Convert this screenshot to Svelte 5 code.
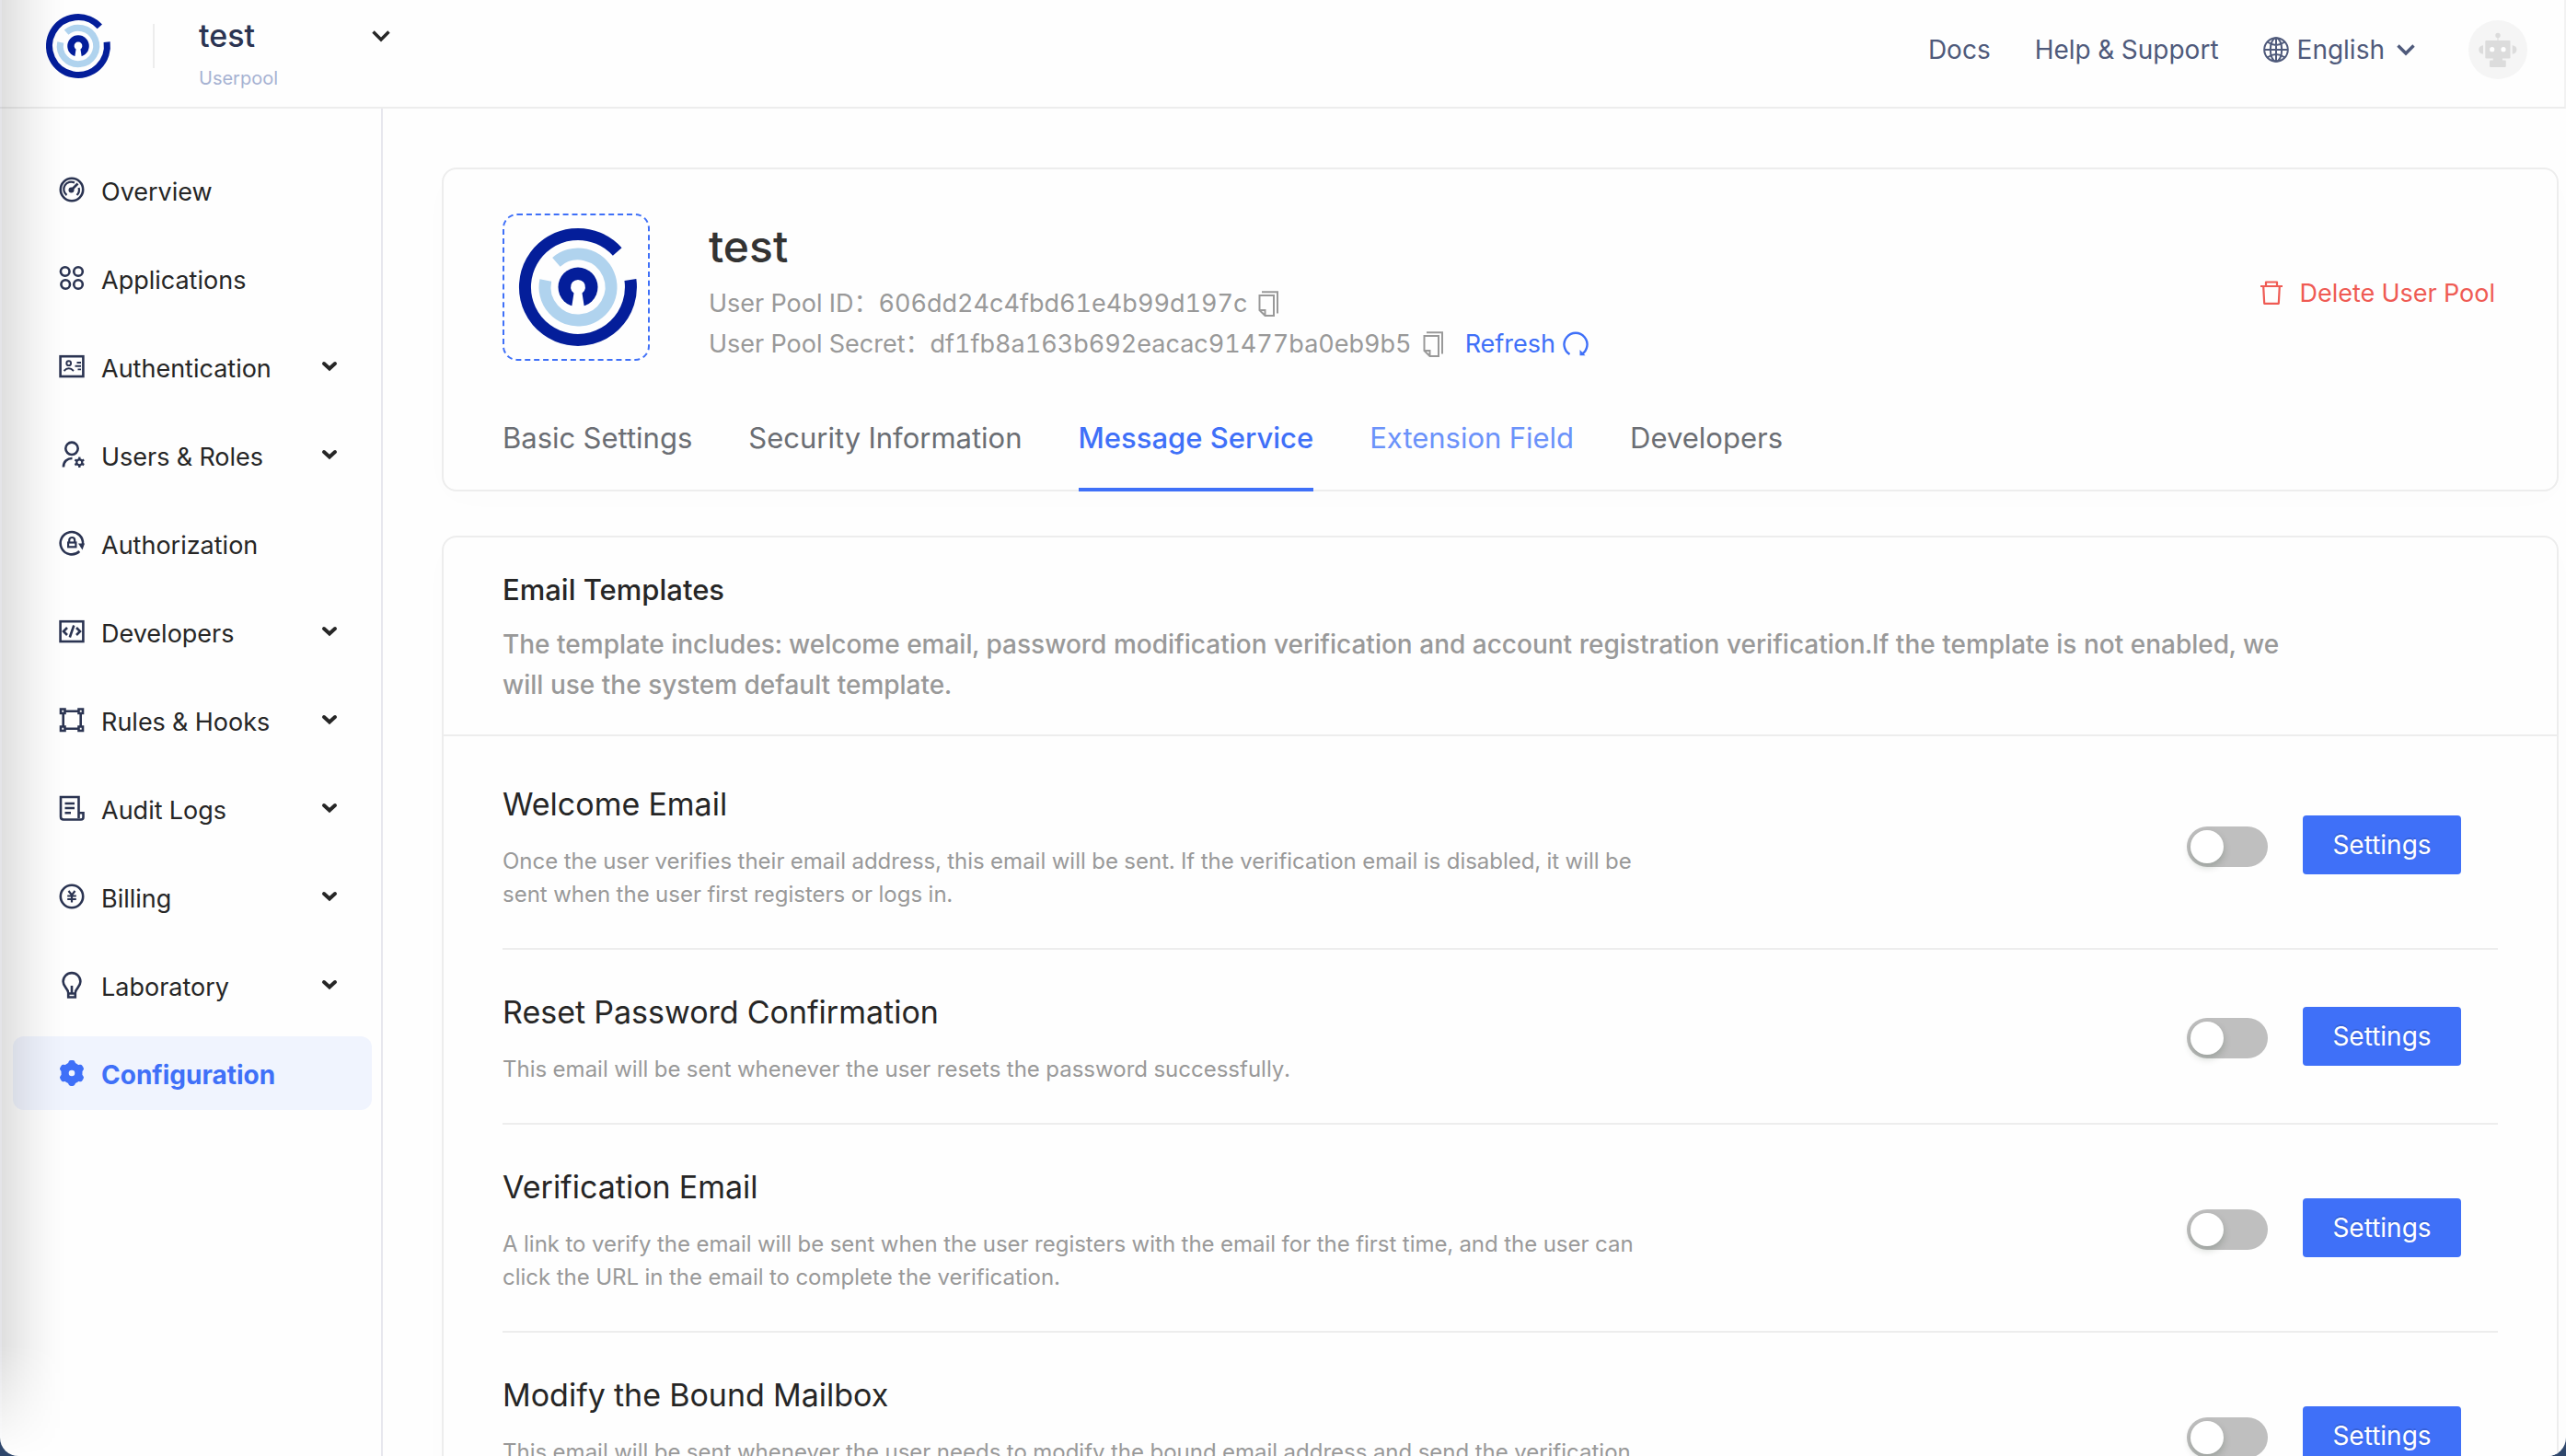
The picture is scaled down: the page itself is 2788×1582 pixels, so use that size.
<script>
  const nav = [
    { icon: 'overview', label: 'Overview' },
    { icon: 'apps', label: 'Applications' },
    { icon: 'auth', label: 'Authentication', group: true },
    { icon: 'users', label: 'Users & Roles', group: true },
    { icon: 'authorization', label: 'Authorization' },
    { icon: 'code', label: 'Developers', group: true },
    { icon: 'rules', label: 'Rules & Hooks', group: true },
    { icon: 'logs', label: 'Audit Logs', group: true },
    { icon: 'billing', label: 'Billing', group: true },
    { icon: 'lab', label: 'Laboratory', group: true },
    { icon: 'config', label: 'Configuration', active: true }
  ];

  const tabs = [
    { label: 'Basic Settings' },
    { label: 'Security Information' },
    { label: 'Message Service', state: 'active' },
    { label: 'Extension Field', state: 'hover' },
    { label: 'Developers' }
  ];

  let templates = $state([
    {
      title: 'Welcome Email',
      text: 'Once the user verifies their email address, this email will be sent. If the verification email is disabled, it will be sent when the user first registers or logs in.',
      on: false
    },
    {
      title: 'Reset Password Confirmation',
      text: 'This email will be sent whenever the user resets the password successfully.',
      on: false
    },
    {
      title: 'Verification Email',
      text: 'A link to verify the email will be sent when the user registers with the email for the first time, and the user can click the URL in the email to complete the verification.',
      on: false
    },
    {
      title: 'Modify the Bound Mailbox',
      text: 'This email will be sent whenever the user needs to modify the bound email address and send the verification link to the new email address.',
      on: false
    }
  ]);

  const spokes = [30, 90, 150, 210, 270, 330];
</script>

{#snippet logo()}
  <svg viewBox="0 0 128 128" aria-hidden="true">
    <g fill="none" stroke-width="13">
      <path stroke="#041e9a" d="M120.9 56A57.5 57.5 0 1 1 106.7 25.5" />
      <path stroke="#b0d3ee" d="M40.4 36.8A36 36 0 1 1 28.8 56.5" />
    </g>
    <circle cx="64" cy="64" r="21.5" fill="#041e9a" />
    <path fill="#fff" d="M59.5 70.5A8 8 0 1 1 68.5 70.5L71 86.5H57z" />
  </svg>
{/snippet}

{#snippet chevron()}
  <svg class="chevron" viewBox="0 0 20 12" aria-hidden="true">
    <path d="M1.5 1.5L10 10L18.5 1.5" fill="none" stroke="currentColor" stroke-width="3.4" />
  </svg>
{/snippet}

{#snippet copy()}
  <svg class="copy" viewBox="0 0 22 28" fill="none" stroke="currentColor" stroke-width="2" aria-hidden="true">
    <path d="M1.5 5H17V27H7.5L1.5 21zM1.5 21H7.5V27M4 1.2H21V24.5" />
  </svg>
{/snippet}

<div class="page">
  <header class="topbar">
    <a class="brand" href="#home" aria-label="Home">{@render logo()}</a>
    <span class="divider"></span>
    <button class="pool" type="button">
      <span class="pool-name">test {@render chevron()}</span>
      <span class="pool-kind">Userpool</span>
    </button>
    <nav class="links" aria-label="Help">
      <a href="#docs">Docs</a>
      <a href="#help">Help &amp; Support</a>
      <button class="lang" type="button">
        <svg class="globe" viewBox="0 0 28 28" fill="none" stroke="currentColor" stroke-width="2" aria-hidden="true">
          <circle cx="14" cy="14" r="12.8" />
          <ellipse cx="14" cy="14" rx="6.2" ry="12.8" />
          <path d="M14 1V27M1 14H27M4.5 5.5Q14 12.5 23.5 5.5M4.5 22.5Q14 15.5 23.5 22.5" />
        </svg>
        <span>English</span>
        {@render chevron()}
      </button>
      <button class="avatar" type="button" aria-label="Account">
        <svg viewBox="0 0 64 64" aria-hidden="true">
          <g fill="#dcdcdc">
            <circle cx="32" cy="16.5" r="2.7" />
            <path d="M31.5 18h1v5h-1z" />
            <rect x="18.3" y="22" width="27.2" height="19.5" rx="1" />
            <path d="M16 27.3v9.4q-4.7-.5-4.7-4.7t4.7-4.7zM47.7 27.3v9.4q4.7-.5 4.7-4.7t-4.7-4.7z" />
            <path d="M26.7 41h10.3v4H26.7z" />
            <rect x="23" y="43.5" width="17.7" height="7.5" rx="1" />
          </g>
          <circle cx="25.7" cy="31.7" r="2.6" fill="#fff" />
          <circle cx="38" cy="31.7" r="2.6" fill="#fff" />
        </svg>
      </button>
    </nav>
  </header>

  <div class="body">
    <nav class="sidebar" aria-label="Main">
      {#each nav as item}
        <a class="item" class:active={item.active} href="#{item.icon}">
          <svg class="icon" viewBox="0 0 28 28" fill="none" stroke="currentColor" stroke-width="2.6" aria-hidden="true">
            {#if item.icon === 'overview'}
              <circle cx="14" cy="14" r="12.2" />
              <path stroke-width="2.2" d="M8.5 20A8 8 0 0 1 17 6.5M21.6 12A8 8 0 0 1 19.5 20" />
              <path d="M14 14L20.5 7.5" />
              <circle cx="13.5" cy="14.5" r="3" fill="currentColor" stroke="none" />
            {:else if item.icon === 'apps'}
              <circle cx="6.7" cy="7" r="4.8" />
              <circle cx="21" cy="7" r="4.8" />
              <circle cx="7.2" cy="21" r="4.8" />
              <circle cx="21" cy="21" r="4.8" />
            {:else if item.icon === 'auth'}
              <rect x="1.6" y="3.2" width="24.8" height="21.8" />
              <g stroke-width="1.9">
                <circle cx="10.7" cy="10.7" r="2.4" />
                <path d="M5.5 19Q10.7 13.5 16 19M19.5 10H24M17.5 13.7H24M20.5 17.4H24" />
              </g>
            {:else if item.icon === 'users'}
              <circle cx="14" cy="7.3" r="6.7" />
              <path d="M4.9 27.5C4.9 21.5 9 18 14.5 18" />
              <circle cx="22.3" cy="22.3" r="3" stroke-width="2.2" />
              {#each spokes as a}
                <path stroke-width="2.4" d="M25.5 22.3H28" transform="rotate({a} 22.3 22.3)" />
              {/each}
            {:else if item.icon === 'authorization'}
              <path d="M22.3 23A12.2 12.2 0 1 1 26 15.5" />
              <path d="M21 14.5H28L25.5 21.5z" fill="currentColor" stroke="none" />
              <rect x="10.1" y="13.5" width="8.3" height="4.8" stroke-width="2.2" />
              <path stroke-width="2.2" d="M11.2 13.5V11a3 3 0 0 1 6 0V13.5" />
            {:else if item.icon === 'code'}
              <rect x="1.6" y="3.2" width="24.8" height="21.8" />
              <path d="M9 10L5 14L9 18M19 10L23 14L19 18M16.3 7.5L11.8 20.5" />
            {:else if item.icon === 'rules'}
              <path d="M2 2.5H6.5V7H2zM21.5 2.5H26V7H21.5zM2 21.5H6.5V26H2zM21.5 21.5H26V26H21.5zM7 4.7H21M7 23.7H21M4.7 7V21M23.7 7V21" />
            {:else if item.icon === 'logs'}
              <path d="M21.5 25V2H2V23.5Q2 26.5 5 26.5H24Q26.5 26.5 26.5 24V19.3H21.5M6.5 9H17M6.5 14H17M6.5 19.3H13" />
            {:else if item.icon === 'billing'}
              <circle cx="14" cy="14" r="12.2" />
              <path stroke-width="2.2" d="M10.5 8L14 12.5L17.5 8M14 12V20.5M9.2 13.5H18.8M9.2 17H18.8" />
            {:else if item.icon === 'lab'}
              <path d="M10 22.5C10 18 4.6 16.5 4.6 10.5A9.4 9.4 0 0 1 23.4 10.5C23.4 16.5 18 18 18 22.5M14 15V24M9 23.5H19M10.2 23V27.5H17.8V23" />
            {:else}
              <circle cx="14" cy="14" r="7.4" stroke-width="8.2" />
              {#each spokes as a}
                <path stroke-width="5" stroke-linecap="round" stroke-linejoin="round" d="M21 11.5L25.4 12.8V15.2L21 16.5" transform="rotate({a} 14 14)" />
              {/each}
            {/if}
          </svg>
          <span class="item-label">{item.label}</span>
          {#if item.group}
            <svg class="caret" viewBox="0 0 16 10" aria-hidden="true">
              <path d="M2 2L8 7.5L14 2" fill="none" stroke="currentColor" stroke-width="4" stroke-linecap="round" />
            </svg>
          {/if}
        </a>
      {/each}
    </nav>

    <main class="content">
      <section class="card overview">
        <div class="summary">
          <div class="pool-logo">{@render logo()}</div>
          <div class="info">
            <h1>test</h1>
            <p>
              <span>User Pool ID&#xFF1A;606dd24c4fbd61e4b99d197c</span>
              <button type="button" aria-label="Copy user pool ID">{@render copy()}</button>
            </p>
            <p>
              <span>User Pool Secret&#xFF1A;df1fb8a163b692eacac91477ba0eb9b5</span>
              <button type="button" aria-label="Copy user pool secret">{@render copy()}</button>
              <button class="refresh" type="button">
                Refresh
                <svg viewBox="0 0 28 28" fill="none" stroke="currentColor" stroke-width="2.4" aria-hidden="true">
                  <path d="M7.5 25A12.5 12.5 0 1 1 20.5 25" />
                  <path d="M18.5 20V26.3H24.5z" fill="currentColor" stroke="none" />
                </svg>
              </button>
            </p>
          </div>
          <button class="delete" type="button">
            <svg viewBox="0 0 24 26" fill="none" stroke="currentColor" stroke-width="2.2" stroke-linejoin="round" aria-hidden="true">
              <path d="M0 6H24M6 6V1.5H18V6M3.2 6L4.2 24.8H19.8L20.8 6" />
            </svg>
            Delete User Pool
          </button>
        </div>
        <div class="tabs" role="tablist">
          {#each tabs as tab}
            <button class="tab {tab.state ?? ''}" type="button" role="tab" aria-selected={tab.state === 'active'}>{tab.label}</button>
          {/each}
        </div>
      </section>

      <section class="card">
        <div class="card-head">
          <h2>Email Templates</h2>
          <p>The template includes: welcome email, password modification verification and account registration verification.If the template is not enabled, we will use the system default template.</p>
        </div>
        <ul class="list">
          {#each templates as row}
            <li class="row">
              <div class="row-text">
                <h3>{row.title}</h3>
                <p>{row.text}</p>
              </div>
              <div class="actions">
                <input class="switch" type="checkbox" role="switch" aria-label={row.title} bind:checked={row.on} />
                <button class="primary" type="button">Settings</button>
              </div>
            </li>
          {/each}
        </ul>
      </section>
    </main>
  </div>
  <div class="edge-shade"></div>
</div>

<style>
  :global(body) {
    background: #2f476c;
  }
  .page {
    --blue: #3f70f8;
    --line: #ededed;
    --muted: #999;
    position: relative;
    display: flex;
    flex-direction: column;
    height: 100vh;
    overflow: hidden;
    border-radius: 0 0 20px 20px;
    background: #fefefe;
    color: #262626;
    font-family: Inter, 'Noto Sans CJK SC', sans-serif;
    font-size: 28px;
    font-variant-numeric: tabular-nums;
  }
  .page * {
    box-sizing: border-box;
  }
  h1, h2, h3, p, ul {
    margin: 0;
    padding: 0;
    font-weight: 400;
  }
  button {
    padding: 0;
    border: 0;
    background: none;
    color: inherit;
    font: inherit;
    cursor: pointer;
  }
  a {
    color: inherit;
    text-decoration: none;
  }
  svg {
    display: block;
    flex: none;
    overflow: visible;
  }

  .topbar {
    flex: none;
    display: flex;
    align-items: flex-start;
    height: 118px;
    padding: 15px 40px 0 50px;
    border-right: 2px solid #f2f2f2;
    border-bottom: 2px solid var(--line);
  }
  .brand {
    width: 70px;
    height: 70px;
  }
  .divider {
    width: 2px;
    height: 48px;
    margin: 11px 48px 0 46px;
    background: var(--line);
  }
  .pool {
    display: flex;
    flex-direction: column;
    gap: 12px;
    width: 208px;
    padding-top: 4px;
    text-align: left;
  }
  .pool-name {
    display: flex;
    align-items: center;
    justify-content: space-between;
    color: #2b3452;
    font-size: 34px;
    font-weight: 500;
    line-height: 40px;
  }
  .pool-name .chevron {
    color: #262626;
  }
  .pool-kind {
    color: #a6b2d2;
    font-size: 20px;
    line-height: 28px;
  }
  .chevron {
    width: 20px;
    height: 12px;
  }
  .links {
    display: flex;
    align-items: center;
    gap: 48px;
    margin-left: auto;
    padding-top: 7px;
    color: #4f5a7b;
  }
  .lang {
    display: flex;
    align-items: center;
    gap: 9px;
  }
  .lang .chevron {
    margin: 0 10px 0 4px;
  }
  .globe {
    width: 28px;
    height: 28px;
  }
  .avatar {
    width: 64px;
    height: 64px;
    border-radius: 50%;
    background: #f5f5f5;
  }

  .body {
    flex: 1;
    display: flex;
    min-height: 0;
  }
  .sidebar {
    flex: none;
    display: flex;
    flex-direction: column;
    gap: 16px;
    width: 416px;
    padding: 48px 10px 0 14px;
    border-right: 2px solid #e7e7ee;
  }
  .item {
    display: flex;
    align-items: center;
    gap: 18px;
    height: 80px;
    padding: 0 38px 0 50px;
    border-radius: 12px;
    font-size: 27px;
  }
  .item.active {
    background: #f0f4fe;
    color: var(--blue);
    font-size: 28px;
    font-weight: 700;
  }
  .icon {
    width: 28px;
    height: 28px;
    color: #2b3452;
  }
  .active .icon {
    color: var(--blue);
  }
  .item-label {
    flex: 1;
    padding-top: 4px;
  }
  .caret {
    width: 16px;
    height: 10px;
  }

  .content {
    flex: 1;
    display: flex;
    flex-direction: column;
    gap: 48px;
    min-width: 0;
    padding: 64px 8px 0 64px;
  }
  .card {
    flex: none;
    border: 2px solid var(--line);
    border-radius: 16px;
    background: #fefefe;
    box-shadow: 0 8px 40px rgba(0, 30, 20, 0.012);
  }
  .overview {
    padding: 48px 64px 0;
  }
  .summary {
    display: flex;
    align-items: flex-start;
  }
  .pool-logo {
    width: 160px;
    height: 160px;
    margin-right: 64px;
    padding: 14px 12px 14px 16px;
    border: 2px dashed var(--blue);
    border-radius: 16px;
  }
  .info h1 {
    margin-bottom: 4px;
    color: #333;
    font-size: 48px;
    font-weight: 500;
    line-height: 72px;
  }
  .info p {
    display: flex;
    align-items: center;
    gap: 12px;
    height: 44px;
    color: var(--muted);
    font-size: 27px;
    line-height: 44px;
  }
  .copy {
    width: 22px;
    height: 28px;
  }
  .refresh {
    display: flex;
    align-items: center;
    gap: 8px;
    margin-left: 12px;
    color: var(--blue);
  }
  .refresh svg {
    width: 28px;
    height: 28px;
  }
  .delete {
    display: flex;
    align-items: center;
    align-self: center;
    gap: 18px;
    margin-left: auto;
    padding: 8px 3px 0 0;
    color: #ef5b54;
    font-size: 27px;
  }
  .delete svg {
    width: 24px;
    height: 26px;
  }
  .tabs {
    display: flex;
    gap: 61px;
    margin: 24px 0 -2px;
    color: #6b6e74;
    font-size: 31px;
  }
  .tab {
    height: 114px;
    border-bottom: 4px solid transparent;
  }
  .tab.active {
    border-bottom-color: var(--blue);
    color: var(--blue);
    font-weight: 500;
  }
  .tab.hover {
    color: #6b92fa;
  }

  .card-head {
    padding: 34px 64px 32px;
    border-bottom: 2px solid var(--line);
  }
  h2 {
    margin-bottom: 14px;
    font-size: 31px;
    font-weight: 500;
    line-height: 46px;
  }
  .card-head p {
    max-width: 1960px;
    color: var(--muted);
    font-weight: 500;
    line-height: 44px;
  }
  .list {
    padding: 6px 64px 0;
    list-style: none;
  }
  .row {
    display: flex;
    align-items: center;
    justify-content: space-between;
    border-bottom: 2px solid var(--line);
  }
  .row-text {
    max-width: 1250px;
    padding: 46px 0 40px;
  }
  h3 {
    margin-bottom: 22px;
    font-size: 34px;
    line-height: 44px;
  }
  .row-text p {
    color: var(--muted);
    font-size: 24px;
    line-height: 36px;
  }
  .actions {
    display: flex;
    align-items: center;
    gap: 38px;
    padding-right: 40px;
  }
  .switch {
    appearance: none;
    width: 88px;
    height: 44px;
    margin: 4px 0 0;
    padding: 4px;
    border-radius: 22px;
    background: #bfbfbf;
    cursor: pointer;
  }
  .switch::before {
    content: '';
    display: block;
    width: 36px;
    height: 36px;
    border-radius: 50%;
    background: #fff;
    box-shadow: 0 4px 8px rgba(0, 35, 11, 0.2);
  }
  .switch:checked {
    background: var(--blue);
  }
  .switch:checked::before {
    margin-left: auto;
  }
  .primary {
    width: 172px;
    height: 64px;
    border-radius: 4px;
    background: var(--blue);
    color: #fff;
    text-shadow: 0 -2px 0 rgba(0, 0, 0, 0.12);
  }

  .edge-shade {
    position: absolute;
    inset: 0 auto 0 0;
    width: 72px;
    border-left: 2px solid rgba(40, 40, 70, 0.12);
    background: linear-gradient(90deg, rgba(0, 0, 0, 0.12), rgba(0, 0, 0, 0.05) 45%, rgba(0, 0, 0, 0.01) 80%, transparent);
    mask-image: linear-gradient(0deg, transparent, #000 120px);
    pointer-events: none;
  }
</style>
